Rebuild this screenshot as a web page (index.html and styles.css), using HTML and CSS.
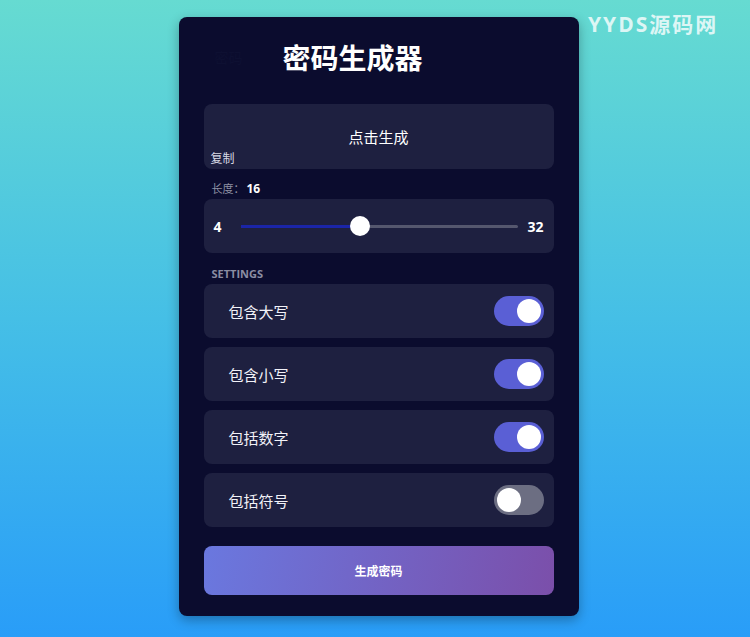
FILE: index.html
```html
<!DOCTYPE html>
<html lang="zh">
<head>
<meta charset="utf-8">
<title>密码生成器</title>
<link rel="stylesheet" href="styles.css">
</head>
<body>
<div class="watermark">YYDS源码网</div>
<main class="card">
  <header class="header">
    <span class="ghost">密码</span>
    <h1 class="title">密码生成器</h1>
  </header>
  <div class="result">
    <span class="result-text">点击生成</span>
    <button class="copy">复制</button>
  </div>
  <div class="len-label">长度：<strong>16</strong></div>
  <div class="box slider-box">
    <span class="num">4</span>
    <div class="track">
      <div class="fill" style="width: 42.86%"></div>
      <div class="thumb" style="left: 42.86%"></div>
    </div>
    <span class="num">32</span>
  </div>
  <div class="section-label">SETTINGS</div>
  <div class="settings">
    <div class="box setting"><span>包含大写</span><span class="toggle on"><span class="knob"></span></span></div>
    <div class="box setting"><span>包含小写</span><span class="toggle on"><span class="knob"></span></span></div>
    <div class="box setting"><span>包括数字</span><span class="toggle on"><span class="knob"></span></span></div>
    <div class="box setting"><span>包括符号</span><span class="toggle"><span class="knob"></span></span></div>
  </div>
  <button class="generate">生成密码</button>
</main>
</body>
</html>
```
FILE: styles.css
```css
html, body {
  margin: 0;
  height: 100%;
}
body {
  font-family: "Open Sans", "Noto Sans CJK SC", sans-serif;
  background: linear-gradient(180deg, #66dbd1 0%, #45bfe6 50%, #299df8 100%);
  display: flex;
  justify-content: center;
  align-items: flex-start;
  padding-left: 7px;
  box-sizing: border-box;
  position: relative;
  overflow: hidden;
}
.watermark {
  position: absolute;
  top: 8px;
  left: 588px;
  font-size: 21px;
  font-weight: 700;
  color: rgba(255, 255, 255, 0.78);
  letter-spacing: 2px;
  font-family: "Open Sans", "Noto Sans CJK SC", sans-serif;
}
.card {
  margin-top: 17px;
  width: 400px;
  box-sizing: border-box;
  padding: 20px 25px 21px;
  background: #0b0c2e;
  border-radius: 8px;
  box-shadow: 0 4px 12px rgba(0, 0, 0, 0.3);
  color: #fff;
}
.header {
  display: flex;
  align-items: center;
  height: 40px;
  margin-bottom: 27px;
  padding-left: 11px;
}
.ghost {
  font-size: 14px;
  color: #0e1032;
  width: 68px;
}
.title {
  margin: 0;
  font-size: 28px;
  font-weight: 700;
  line-height: 40px;
  font-family: "Noto Sans CJK SC", sans-serif;
}
.result {
  position: relative;
  height: 65px;
  background: #1e2040;
  border-radius: 8px;
  display: flex;
  justify-content: center;
  padding-top: 23px;
  box-sizing: border-box;
}
.result-text {
  font-size: 15px;
  line-height: 20px;
  font-family: "Noto Sans CJK SC", sans-serif;
}
.copy {
  position: absolute;
  left: 7px;
  bottom: 3px;
  background: none;
  border: 0;
  padding: 0;
  color: #d8d9e4;
  font-size: 12px;
  font-family: "Noto Sans CJK SC", sans-serif;
}
.len-label {
  margin-top: 12px;
  height: 16px;
  line-height: 16px;
  padding-left: 8px;
  font-size: 11px;
  color: #8e90a3;
  margin-bottom: 2px;
}
.len-label strong {
  color: #fff;
  font-weight: 700;
  font-size: 12px;
  margin-left: 2px;
}
.box {
  background: #1e2040;
  border-radius: 8px;
  height: 54px;
  box-sizing: border-box;
  display: flex;
  align-items: center;
}
.slider-box {
  padding: 0 10px;
}
.num {
  font-size: 14px;
  font-weight: 700;
  color: #fff;
}
.track {
  position: relative;
  flex: 1;
  height: 3px;
  background: #55576e;
  margin: 0 9px 0 19px;
  border-radius: 2px;
}
.fill {
  height: 100%;
  background: #1b25a8;
}
.thumb {
  position: absolute;
  top: 50%;
  width: 20px;
  height: 20px;
  background: #fff;
  border-radius: 50%;
  transform: translate(-50%, -50%);
}
.section-label {
  margin-top: 13px;
  height: 16px;
  line-height: 16px;
  padding-left: 8px;
  font-size: 11px;
  font-weight: 700;
  color: #8b8da3;
  margin-bottom: 2px;
}
.settings {
  display: flex;
  flex-direction: column;
  gap: 9px;
}
.setting {
  justify-content: space-between;
  padding: 0 10px 0 25px;
  font-size: 15px;
  color: #f2f2f8;
  font-family: "Noto Sans CJK SC", sans-serif;
}
.toggle {
  width: 50px;
  height: 30px;
  border-radius: 15px;
  background: #6c6e82;
  display: flex;
  align-items: center;
  padding: 0 3px;
  box-sizing: border-box;
}
.toggle.on {
  background: #5a5fd5;
  justify-content: flex-end;
}
.knob {
  width: 24px;
  height: 24px;
  border-radius: 50%;
  background: #fff;
}
.generate {
  margin-top: 19px;
  width: 100%;
  height: 49px;
  border: 0;
  border-radius: 8px;
  background: linear-gradient(100deg, #6a78df 0%, #7b4faa 100%);
  color: #fff;
  font-size: 12px;
  font-weight: 700;
  font-family: "Noto Sans CJK SC", sans-serif;
  display: block;
}
```
